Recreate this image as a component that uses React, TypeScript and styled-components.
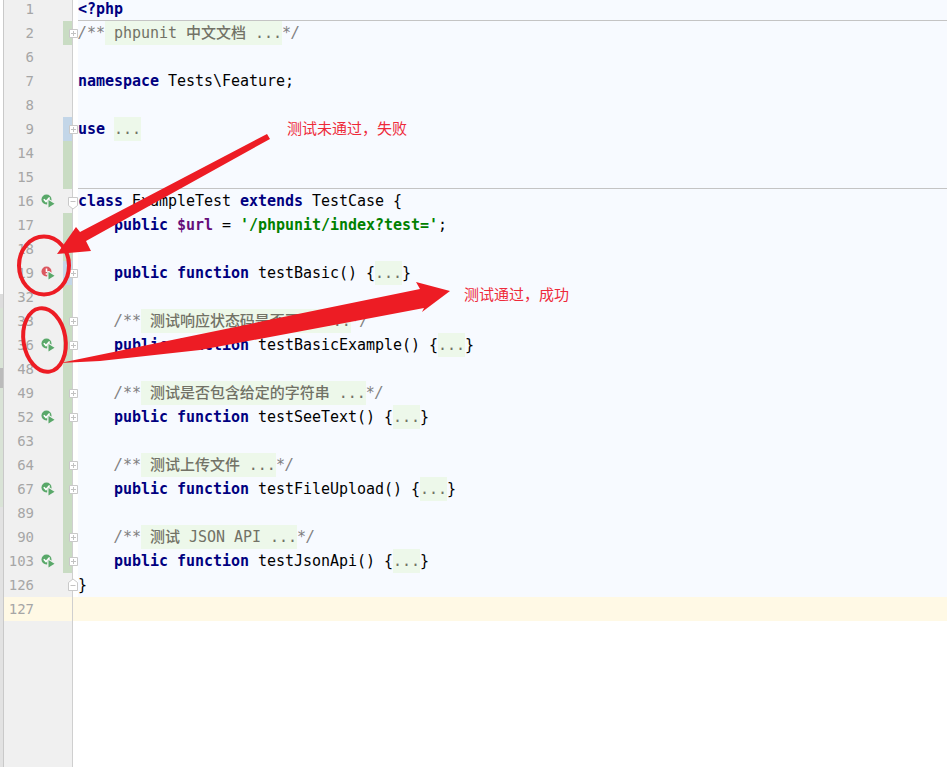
import { ReactNode } from 'react';
import styled, { createGlobalStyle } from 'styled-components';

const GlobalStyle = createGlobalStyle`
  html, body {
    margin: 0;
    padding: 0;
    background: #fff;
  }
`;

const MONO = `"DejaVu Sans Mono", "Noto Sans CJK SC", monospace`;

const Page = styled.div`
  position: relative;
  display: flex;
  width: 100vw;
  height: 100vh;
  overflow: hidden;
  background: #fff;
`;

const Strip = styled.div`
  width: 3px;
  display: flex;
  flex-direction: column;
  border-right: 1px solid #c9c9c9;
  flex-shrink: 0;
`;

const StripPart = styled.div<{ $h?: number; $c: string }>`
  background: ${p => p.$c};
  height: ${p => (p.$h ? `${p.$h}px` : 'auto')};
  flex: ${p => (p.$h ? '0 0 auto' : '1')};
`;

const Gutter = styled.div`
  position: relative;
  z-index: 2;
  width: 69px;
  flex-shrink: 0;
  display: flex;
  flex-direction: column;
  margin-top: -3px;
`;

const GutterCell = styled.div<{ $current?: boolean }>`
  position: relative;
  height: 24px;
  flex-shrink: 0;
  display: flex;
  align-items: center;
  box-sizing: border-box;
  border-right: 1px solid #cfcfcf;
  background: ${p => (p.$current ? '#fff9e5' : '#f0f0f0')};
`;

const GutterFill = styled.div`
  flex: 1;
  background: #f0f0f0;
  border-right: 1px solid #cfcfcf;
`;

const LineNo = styled.span`
  width: 30px;
  text-align: right;
  font: 14px/24px ${MONO};
  color: #a6a6a6;
  flex-shrink: 0;
`;

const IconSlot = styled.span`
  display: flex;
  width: 14px;
  height: 14px;
  margin-left: 7px;
  flex-shrink: 0;
`;

const ChangeBar = styled.span<{ $kind?: 'add' | 'edit' }>`
  margin-left: auto;
  width: 9px;
  align-self: stretch;
  background: ${p => (p.$kind === 'add' ? '#c9dcc3' : p.$kind === 'edit' ? '#c3d6e8' : 'transparent')};
`;

const FoldMark = styled.svg`
  position: absolute;
  left: 64px;
  top: 3px;
  width: 10px;
  height: 18px;
`;

const Editor = styled.div`
  flex: 1;
  min-width: 0;
  display: flex;
  flex-direction: column;
  margin-top: -3px;
`;

const EditorRow = styled.div<{ $current?: boolean }>`
  height: 24px;
  flex-shrink: 0;
  padding-left: ${p => (p.$current ? '0' : '5px')};
  background: ${p => (p.$current ? '#fff9e5' : '#fff')};
`;

const Code = styled.div<{ $rule?: boolean; $current?: boolean }>`
  height: 24px;
  box-sizing: border-box;
  background: ${p => (p.$current ? 'transparent' : '#f7faff')};
  border-bottom: ${p => (p.$rule ? '1px solid #c4c4c4' : 'none')};
  font: 15px/24px ${MONO};
  letter-spacing: -0.03px;
  color: #000;
  white-space: pre;
`;

const Kw = styled.span`
  color: #000080;
  font-weight: bold;
`;

const Cmt = styled.span`
  color: #808080;
  font-style: italic;
`;

const Var = styled.span`
  color: #660e7a;
  font-weight: bold;
`;

const Str = styled.span`
  color: #008000;
  font-weight: bold;
`;

const Folded = styled.span`
  display: inline-block;
  height: 24px;
  background: #edf8ea;
  color: #727266;
  font-weight: 500;
`;

const Note = styled.span<{ $x: number; $y: number }>`
  position: absolute;
  z-index: 4;
  left: ${p => p.$x}px;
  top: ${p => p.$y}px;
  font: 15px/20px "Noto Sans CJK SC", sans-serif;
  color: #ee2a3a;
  white-space: nowrap;
`;

const Overlay = styled.svg`
  position: absolute;
  z-index: 3;
  left: 0;
  top: 0;
  width: 947px;
  height: 767px;
  pointer-events: none;
`;

function TestIcon({ failed }: { failed?: boolean }) {
  return (
    <IconSlot>
      <svg width="14" height="14" viewBox="0 0 14 14">
        <circle cx="5.5" cy="5.5" r="5" fill={failed ? '#db5860' : '#59a869'} />
        {failed ? (
          <path d="M5.5 2.5v3.6M5.5 7.3v1.4" stroke="#fff" strokeWidth="1.6" fill="none" />
        ) : (
          <path d="M2.8 5.2l2.2 2.3 3.6-4" stroke="#fff" strokeWidth="1.6" fill="none" />
        )}
        <path d="M6.2 5h2.2l5.6 4.5-5.6 4.5H6.2z" fill="#f0f0f0" />
        <path d="M7.5 6l6 3.8-6 3.8z" fill="#59a869" />
      </svg>
    </IconSlot>
  );
}

const foldOutlines = {
  plus: 'M1.5 5.5h8v8h-8z',
  open: 'M.5 5.5h9v8L5 17 .5 13.5z',
  close: 'M.5 14.5h9v-8L5 3 .5 6.5z',
};

function Fold({ kind }: { kind: 'plus' | 'open' | 'close' }) {
  return (
    <FoldMark viewBox="0 0 10 18">
      <path d={foldOutlines[kind]} fill="#fff" stroke="#c9c9c9" strokeWidth="1" />
      <path d={kind === 'plus' ? 'M3 9.5h5' : 'M2.5 9.5h5'} stroke="#c2c2c2" strokeWidth="1" />
      {kind === 'plus' && <path d="M5.5 7v5" stroke="#c2c2c2" strokeWidth="1" />}
    </FoldMark>
  );
}

const Dots = () => <Folded>...</Folded>;

const DocBlock = ({ text }: { text: string }) => (
  <>
    <Cmt>{'    /**'}</Cmt>
    <Folded> {text} ...</Folded>
    <Cmt>*/</Cmt>
  </>
);

const Method = ({ name }: { name: string }) => (
  <>
    {'    '}
    <Kw>public function</Kw> {name}() {'{'}
    <Dots />
    {'}'}
  </>
);

interface Line {
  no: number;
  code?: ReactNode;
  bar?: 'add' | 'edit';
  fold?: 'plus' | 'open' | 'close';
  test?: 'ok' | 'fail';
  rule?: boolean;
  current?: boolean;
}

const lines: Line[] = [
  { no: 1, code: <Kw>{'<?php'}</Kw>, rule: true },
  {
    no: 2,
    bar: 'add',
    fold: 'plus',
    code: (
      <>
        <Cmt>/**</Cmt>
        <Folded> phpunit 中文文档 ...</Folded>
        <Cmt>*/</Cmt>
      </>
    ),
  },
  { no: 6 },
  {
    no: 7,
    code: (
      <>
        <Kw>namespace</Kw> Tests\Feature;
      </>
    ),
  },
  { no: 8 },
  {
    no: 9,
    bar: 'edit',
    fold: 'plus',
    code: (
      <>
        <Kw>use</Kw> <Dots />
      </>
    ),
  },
  { no: 14, bar: 'add' },
  { no: 15, bar: 'add', rule: true },
  {
    no: 16,
    fold: 'open',
    test: 'ok',
    code: (
      <>
        <Kw>class</Kw> ExampleTest <Kw>extends</Kw> TestCase {'{'}
      </>
    ),
  },
  {
    no: 17,
    bar: 'add',
    code: (
      <>
        {'    '}
        <Kw>public</Kw> <Var>$url</Var> = <Str>'/phpunit/index?test='</Str>;
      </>
    ),
  },
  { no: 18, bar: 'add' },
  { no: 19, bar: 'edit', fold: 'plus', test: 'fail', code: <Method name="testBasic" /> },
  { no: 32, bar: 'add' },
  { no: 33, bar: 'add', fold: 'plus', code: <DocBlock text="测试响应状态码是否正常" /> },
  { no: 36, bar: 'add', fold: 'plus', test: 'ok', code: <Method name="testBasicExample" /> },
  { no: 48, bar: 'add' },
  { no: 49, bar: 'add', fold: 'plus', code: <DocBlock text="测试是否包含给定的字符串" /> },
  { no: 52, bar: 'add', fold: 'plus', test: 'ok', code: <Method name="testSeeText" /> },
  { no: 63, bar: 'add' },
  { no: 64, bar: 'add', fold: 'plus', code: <DocBlock text="测试上传文件" /> },
  { no: 67, bar: 'add', fold: 'plus', test: 'ok', code: <Method name="testFileUpload" /> },
  { no: 89, bar: 'add' },
  { no: 90, bar: 'add', fold: 'plus', code: <DocBlock text="测试 JSON API" /> },
  { no: 103, bar: 'add', fold: 'plus', test: 'ok', code: <Method name="testJsonApi" /> },
  { no: 126, fold: 'close', code: '}' },
  { no: 127, current: true },
];

export default function App() {
  return (
    <Page>
      <GlobalStyle />
      <Strip>
        <StripPart $h={294} $c="#ffffff" />
        <StripPart $h={14} $c="#dcdcdc" />
        <StripPart $h={60} $c="#d9e3d6" />
        <StripPart $h={20} $c="#bbbbbb" />
        <StripPart $h={119} $c="#d9e3d6" />
        <StripPart $c="#e2e2e2" />
      </Strip>

      <Gutter>
        {lines.map(line => (
          <GutterCell key={line.no} $current={line.current}>
            <LineNo>{line.no}</LineNo>
            {line.test && <TestIcon failed={line.test === 'fail'} />}
            <ChangeBar $kind={line.bar} />
            {line.fold && <Fold kind={line.fold} />}
          </GutterCell>
        ))}
        <GutterFill />
      </Gutter>

      <Editor>
        {lines.map(line => (
          <EditorRow key={line.no} $current={line.current}>
            <Code $rule={line.rule} $current={line.current}>
              {line.code}
            </Code>
          </EditorRow>
        ))}
      </Editor>

      <Overlay viewBox="0 0 947 767">
        <g fill="#ed1c24">
          <path d="M267 134L270 139L86 241L91 251L57 254L76 227L80 232Z" />
          <path d="M60 363L420 289L416 282L450 291L422 312L424 308L350 322L200 350L100 361Z" />
        </g>
        <g fill="none" stroke="#ed1c24" strokeWidth="4">
          <ellipse cx="44" cy="265.5" rx="25" ry="29" />
          <ellipse cx="44.5" cy="340" rx="21" ry="32" transform="rotate(-9 44.5 340)" />
        </g>
      </Overlay>
      <Note $x={287} $y={118}>测试未通过，失败</Note>
      <Note $x={464} $y={284}>测试通过，成功</Note>
    </Page>
  );
}
